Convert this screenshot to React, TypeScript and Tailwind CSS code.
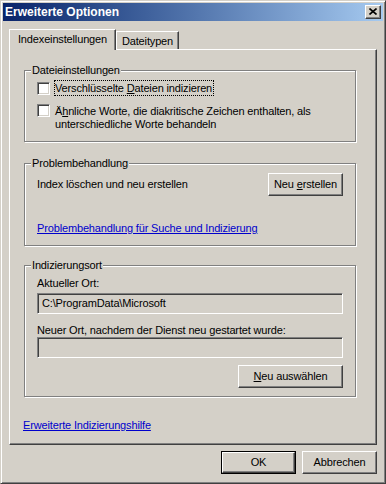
import type { ReactNode } from "react";

const raised =
  "border border-t-white border-l-white border-r-[#404040] border-b-[#404040] shadow-[inset_-1px_-1px_0_#808080]";
const sunken =
  "border border-t-[#808080] border-l-[#808080] border-r-white border-b-white shadow-[inset_1px_1px_0_#404040,inset_-1px_-1px_0_#d4d0c8]";

function Button({
  children,
  isDefault = false,
  className = "",
}: {
  children: ReactNode;
  isDefault?: boolean;
  className?: string;
}) {
  if (isDefault) {
    return (
      <div className={`h-[23px] border border-black ${className}`}>
        <div className={`flex h-full w-full items-center justify-center ${raised}`}>
          <span>{children}</span>
        </div>
      </div>
    );
  }

  return (
    <div className={`flex h-[23px] items-center justify-center ${raised} ${className}`}>
      <span>{children}</span>
    </div>
  );
}

function Check({ className = "" }: { className?: string }) {
  return <div className={`h-[13px] w-[13px] shrink-0 bg-white ${sunken} ${className}`} />;
}

function Group({
  label,
  className = "",
  children,
}: {
  label: string;
  className?: string;
  children: ReactNode;
}) {
  return (
    <div
      className={`relative w-[332px] border border-[#808080] shadow-[inset_1px_1px_0_#fff,1px_1px_0_#fff] ${className}`}
    >
      <span className="absolute left-[6px] top-[-7px] bg-[#d4d0c8] px-[1px] leading-[13px]">
        {label}
      </span>
      {children}
    </div>
  );
}

function Link({ children, className = "" }: { children: ReactNode; className?: string }) {
  return (
    <a href="#" className={`block leading-[13px] text-[#0000cc] underline ${className}`}>
      {children}
    </a>
  );
}

export default function App() {
  return (
    <div className="h-[484px] w-[386px] border border-t-[#d4d0c8] border-l-[#d4d0c8] border-r-[#404040] border-b-[#404040] bg-[#d4d0c8] p-[2px] text-[11px] tracking-[-0.15px] text-black shadow-[inset_1px_1px_0_#fff,inset_-1px_-1px_0_#808080] [font-family:'Liberation_Sans',Arial,sans-serif]">
      {/* title bar */}
      <div className="flex h-[18px] items-center justify-between bg-linear-to-r from-[#0a246a] to-[#a6caf0] pl-[2px] pr-[2px]">
        <span className="text-[12px] font-bold tracking-normal text-white">
          Erweiterte Optionen
        </span>
        <div className={`flex h-[14px] w-[16px] items-center justify-center bg-[#d4d0c8] ${raised}`}>
          <svg width="8" height="7" viewBox="0 0 8 7" className="mt-[-1px]">
            <path d="M0.5 0.5 L7.5 6.5 M7.5 0.5 L0.5 6.5" stroke="#000" strokeWidth="1.6" />
          </svg>
        </div>
      </div>

      <div className="px-[6px] pt-[8px]">
        {/* tabs */}
        <div className="flex h-[20px] items-start">
          <div className="relative z-10 flex h-[21px] w-[107px] justify-center border-l border-t border-r border-l-white border-t-white border-r-[#404040] bg-[#d4d0c8] pt-[3px] leading-[13px] shadow-[inset_-1px_0_0_#808080]">
            Indexeinstellungen
          </div>
          <div className="mt-[2px] flex h-[18px] w-[63px] justify-center border-l border-t border-r border-l-white border-t-white border-r-[#404040] pt-[3px] leading-[13px] shadow-[inset_-1px_0_0_#808080]">
            Dateitypen
          </div>
        </div>

        {/* tab page */}
        <div className={`h-[396px] w-[368px] pl-[14px] pt-[20px] ${raised}`}>
          <Group label="Dateieinstellungen" className="h-[72px]">
            <div className="pl-[12px] pt-[9px]">
              <div className="flex items-start">
                <Check className="mt-[2px]" />
                <span className="ml-[4px] border border-dotted border-black pr-[1px] leading-[14px]">
                  Verschlüsselte <u>D</u>ateien indizieren
                </span>
              </div>
              <div className="mt-[8px] flex items-start">
                <Check />
                <span className="ml-[5px] mt-[1px] leading-[13px]">
                  Ä<u>h</u>nliche Worte, die diakritische Zeichen enthalten, als
                  <br />
                  unterschiedliche Worte behandeln
                </span>
              </div>
            </div>
          </Group>

          <Group label="Problembehandlung" className="mt-[21px] h-[83px]">
            <div className="px-[12px] pt-[9px]">
              <div className="flex items-center justify-between">
                <span className="leading-[13px]">Index löschen und neu erstellen</span>
                <Button className="w-[75px]">
                  Neu <u>e</u>rstellen
                </Button>
              </div>
              <Link className="mt-[26px]">Problembehandlung für Suche und Indizierung</Link>
            </div>
          </Group>

          <Group label="Indizierungsort" className="mt-[19px] h-[132px]">
            <div className="px-[12px] pt-[11px]">
              <p className="leading-[13px]">Aktueller Ort:</p>
              <div className={`mt-[3px] flex h-[21px] w-[306px] items-center pl-[4px] ${sunken}`}>
                {"C:\\ProgramData\\Microsoft"}
              </div>
              <p className="mt-[10px] leading-[13px]">
                Neuer Ort, nachdem der Dienst neu gestartet wurde:
              </p>
              <div className={`h-[21px] w-[306px] ${sunken}`} />
              <div className="mt-[7px] flex justify-end">
                <Button className="w-[105px]">
                  <u>N</u>eu auswählen
                </Button>
              </div>
            </div>
          </Group>

          <Link className="-ml-[1px] mt-[22px] w-fit">Erweiterte Indizierungshilfe</Link>
        </div>

        {/* dialog buttons */}
        <div className="mt-[6px] flex justify-end gap-[6px]">
          <Button isDefault className="w-[75px]">
            OK
          </Button>
          <Button className="w-[75px]">Abbrechen</Button>
        </div>
      </div>
    </div>
  );
}
